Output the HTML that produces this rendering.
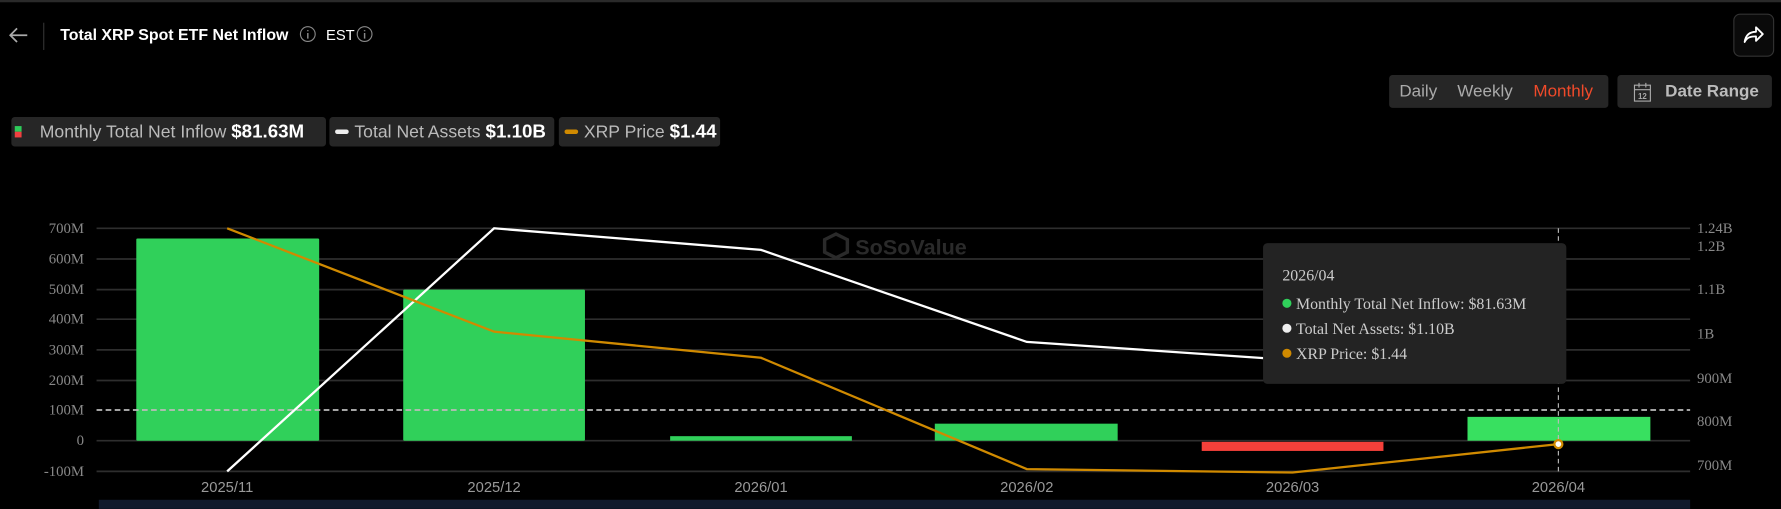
<!DOCTYPE html>
<html><head><meta charset="utf-8"><style>
body{margin:0;width:1781px;height:509px;background:#000;overflow:hidden;font-family:"Liberation Sans",sans-serif;position:relative}
#w{position:absolute;left:0;top:0;width:1568px;height:448px;transform:scale(1.13584);transform-origin:0 0}
.a{position:absolute}
.pill{position:absolute;top:103px;height:26px;background:#262626;border-radius:3px;color:#bbb;font-size:15.5px;line-height:26px;white-space:nowrap}
.pill b{color:#fff;font-size:16.5px}
</style></head><body><div id="w">
<div class="a" style="left:0;top:0;width:1568px;height:2px;background:#2a2a2a"></div>
<svg class="a" style="left:6px;top:22px" width="20" height="18"><path d="M18 9H3M9 3L3 9l6 6" stroke="#aaa" stroke-width="1.5" fill="none"/></svg>
<div class="a" style="left:38px;top:20px;width:1px;height:24px;background:#333"></div>
<div class="a" style="left:53px;top:22px;color:#fff;font-weight:bold;font-size:14px">Total XRP Spot ETF Net Inflow</div>
<svg class="a" style="left:263px;top:22px" width="16" height="16"><circle cx="8" cy="8" r="6.5" stroke="#888" fill="none"/><path d="M8 7v5M8 4.5v1" stroke="#888" stroke-width="1.3"/></svg>
<div class="a" style="left:287px;top:23px;color:#fff;font-size:13px">EST</div>
<svg class="a" style="left:313px;top:22px" width="16" height="16"><circle cx="8" cy="8" r="6.5" stroke="#888" fill="none"/><path d="M8 7v5M8 4.5v1" stroke="#888" stroke-width="1.3"/></svg>
<div class="a" style="left:1526px;top:12px;width:34px;height:36px;border:1px solid #333;border-radius:6px;background:#0a0a0a"></div>
<svg class="a" style="left:1533px;top:20px" width="22" height="20"><path d="M3 17C4 10 8 8 13 8V4l6 6-6 6v-4C8 12 5 13 3 17Z" stroke="#fff" stroke-width="1.6" fill="none" stroke-linejoin="round"/></svg>
<div class="a" style="left:1223px;top:66px;width:193px;height:29px;background:#262626;border-radius:3px;font-size:15px;line-height:29px;color:#aaa">
<span class="a" style="left:9px">Daily</span><span class="a" style="left:60px">Weekly</span><span class="a" style="left:127px;color:#f04a2a">Monthly</span></div>
<div class="a" style="left:1424px;top:66px;width:136px;height:29px;background:#262626;border-radius:3px;font-size:15px;line-height:29px;color:#bbb;font-weight:bold">
<svg class="a" style="left:14px;top:6px" width="16" height="18"><rect x="1" y="3" width="14" height="14" stroke="#aaa" fill="none"/><path d="M1 7h14M5 1v4M11 1v4" stroke="#aaa"/><text x="8" y="15" font-size="7" fill="#aaa" text-anchor="middle">12</text></svg>
<span class="a" style="left:42px">Date Range</span></div>
<div class="pill" style="left:10px;width:277px"><span class="a" style="left:3px;top:8px;width:6px;height:5px;background:#2ecc5a"></span><span class="a" style="left:3px;top:13px;width:6px;height:5px;background:#f04040"></span><span style="margin-left:25px">Monthly Total Net Inflow </span><b>$81.63M</b></div>
<div class="pill" style="left:290px;width:198px"><span class="a" style="left:5px;top:11px;width:12px;height:4px;border-radius:2px;background:#eee"></span><span style="margin-left:22px">Total Net Assets </span><b>$1.10B</b></div>
<div class="pill" style="left:492px;width:142px"><span class="a" style="left:5px;top:11px;width:12px;height:4px;border-radius:2px;background:#d08a00"></span><span style="margin-left:22px">XRP Price </span><b>$1.44</b></div>
<svg class="a" style="left:0;top:180px" width="1568" height="268">
<g stroke="#2e2e2e" stroke-width="1.5">
<line x1="85" x2="1488" y1="21" y2="21"/><line x1="85" x2="1488" y1="48" y2="48"/><line x1="85" x2="1488" y1="75" y2="75"/><line x1="85" x2="1488" y1="101" y2="101"/><line x1="85" x2="1488" y1="128" y2="128"/><line x1="85" x2="1488" y1="155" y2="155"/><line x1="85" x2="1488" y1="208" y2="208"/><line x1="85" x2="1488" y1="235" y2="235"/></g>
<g font-family="Liberation Serif" font-size="13" fill="#888" text-anchor="end">
<text x="74" y="25">700M</text><text x="74" y="52">600M</text><text x="74" y="79">500M</text><text x="74" y="105">400M</text><text x="74" y="132">300M</text><text x="74" y="159">200M</text><text x="74" y="185">100M</text><text x="74" y="212">0</text><text x="74" y="239">-100M</text></g>
<g font-family="Liberation Serif" font-size="13" fill="#888">
<text x="1494" y="25">1.24B</text><text x="1494" y="41">1.2B</text><text x="1494" y="79">1.1B</text><text x="1494" y="118">1B</text><text x="1494" y="157">900M</text><text x="1494" y="195">800M</text><text x="1494" y="234">700M</text></g>
<g font-size="13" fill="#999" text-anchor="middle"><text x="200" y="253">2025/11</text><text x="435" y="253">2025/12</text><text x="670" y="253">2026/01</text><text x="904" y="253">2026/02</text><text x="1138" y="253">2026/03</text><text x="1372" y="253">2026/04</text></g>
<text x="753" y="44" font-size="19" font-weight="bold" fill="#2a2a2a">SoSoValue</text>
<path d="M736 26l10 5v11l-10 5-10-5V31z" fill="none" stroke="#2a2a2a" stroke-width="3"/>
<g fill="#30d05a"><rect x="120" y="30" width="161" height="178" rx="1"/><rect x="355" y="75" width="160" height="133" rx="1"/><rect x="590" y="204" width="160" height="4"/><rect x="823" y="193" width="161" height="15"/><rect x="1292" y="187" width="161" height="21" fill="#38e060"/></g>
<rect x="1058" y="209" width="160" height="8" fill="#f5403a"/>
<line x1="85" x2="1488" y1="181" y2="181" stroke="#bbb" stroke-width="1.5" stroke-dasharray="5,3"/>
<line x1="1372" x2="1372" y1="21" y2="235" stroke="#bbb" stroke-dasharray="4,3"/>
<polyline points="200,235 435,21 670,40 904,121 1138,137 1372,150" fill="none" stroke="#fff" stroke-width="2"/>
<polyline points="200,21 435,112 670,135 904,233 1138,236 1372,211" fill="none" stroke="#d08a00" stroke-width="2"/>
<circle cx="1372" cy="211" r="3.5" fill="#fff" stroke="#d08a00" stroke-width="2"/>
<rect x="1112" y="34" width="267" height="124" rx="4" fill="#232323"/>
<g font-family="Liberation Serif" font-size="14" fill="#ccc"><text x="1129" y="67">2026/04</text><text x="1141" y="92">Monthly Total Net Inflow: $81.63M</text><text x="1141" y="114">Total Net Assets: $1.10B</text><text x="1141" y="136">XRP Price: $1.44</text></g>
<circle cx="1133" cy="87" r="4" fill="#30d05a"/><circle cx="1133" cy="109" r="4" fill="#eee"/><circle cx="1133" cy="131" r="4" fill="#d08a00"/>
<rect x="87" y="260" width="1401" height="10" fill="#111a2c"/>
</svg>
</div></body></html>
